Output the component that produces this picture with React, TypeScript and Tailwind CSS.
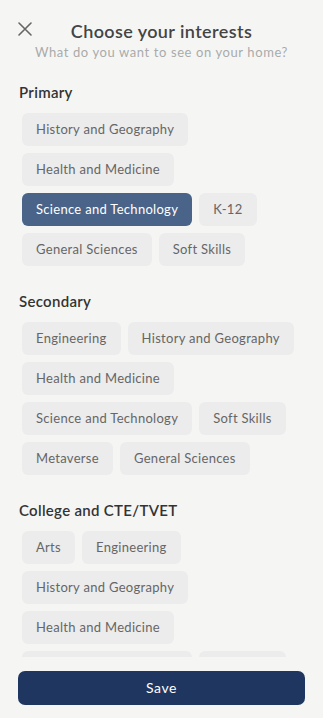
import { useState } from 'react'

type Section = {
  title: string
  items: string[]
}

const SECTIONS: Section[] = [
  {
    title: 'Primary',
    items: ['History and Geography', 'Health and Medicine', 'Science and Technology', 'K-12', 'General Sciences', 'Soft Skills'],
  },
  {
    title: 'Secondary',
    items: ['Engineering', 'History and Geography', 'Health and Medicine', 'Science and Technology', 'Soft Skills', 'Metaverse', 'General Sciences'],
  },
  {
    title: 'College and CTE/TVET',
    items: ['Arts', 'Engineering', 'History and Geography', 'Health and Medicine', 'Science and Technology', 'Soft Skills', 'Metaverse', 'General Sciences'],
  },
]

export default function App() {
  const [selected, setSelected] = useState<Record<string, boolean>>({ 'Primary:Science and Technology': true })

  const toggle = (key: string) => setSelected(s => ({ ...s, [key]: !s[key] }))

  return (
    <div
      className="h-[718px] w-full flex flex-col bg-[#f5f6f4] text-[#333]"
      style={{ fontFamily: 'Lato, "Open Sans", sans-serif' }}
    >
      <div className="flex-1 overflow-hidden">
        {/* Header */}
        <div className="relative pt-[20px] text-center">
          <button className="absolute left-[18px] top-[22px] text-[#666]">
            <svg width="14" height="14" viewBox="0 0 14 14" fill="none" stroke="currentColor" strokeWidth="1.6" strokeLinecap="round">
              <path d="M1 1L13 13M13 1L1 13" />
            </svg>
          </button>
          <h1 className="text-[18px] leading-[22px] font-semibold text-[#444] tracking-[0.4px]">Choose your interests</h1>
          <p className="text-[13px] leading-[16px] text-[#aaa] mt-[2px] tracking-[0.6px]">What do you want to see on your home?</p>
        </div>

        {SECTIONS.map((section, si) => (
          <div key={section.title} className={si === 0 ? 'mt-[22px]' : 'mt-[25px]'}>
            <h2 className="px-[19px] text-[15px] leading-[20px] font-semibold text-[#333] tracking-[0.3px]">{section.title}</h2>
            <div className="mt-[11px] pl-[22px] pr-[18px] flex flex-wrap gap-[7px]">
              {section.items.map(item => {
                const key = `${section.title}:${item}`
                const on = !!selected[key]
                return (
                  <button
                    key={key}
                    onClick={() => toggle(key)}
                    className={`h-[33px] px-[14px] rounded-[6px] text-[13px] tracking-[0.3px] ${
                      on ? 'bg-[#4a6389] text-white' : 'bg-[#ececec] text-[#666]'
                    }`}
                  >
                    {item}
                  </button>
                )
              })}
            </div>
          </div>
        ))}
      </div>

      {/* Footer */}
      <div className="px-[18px] pt-[14px] pb-[13px]">
        <button className="w-full h-[34px] rounded-[7px] bg-[#1f3660] text-white text-[14px] leading-[34px] tracking-[0.6px]">Save</button>
      </div>
    </div>
  )
}
